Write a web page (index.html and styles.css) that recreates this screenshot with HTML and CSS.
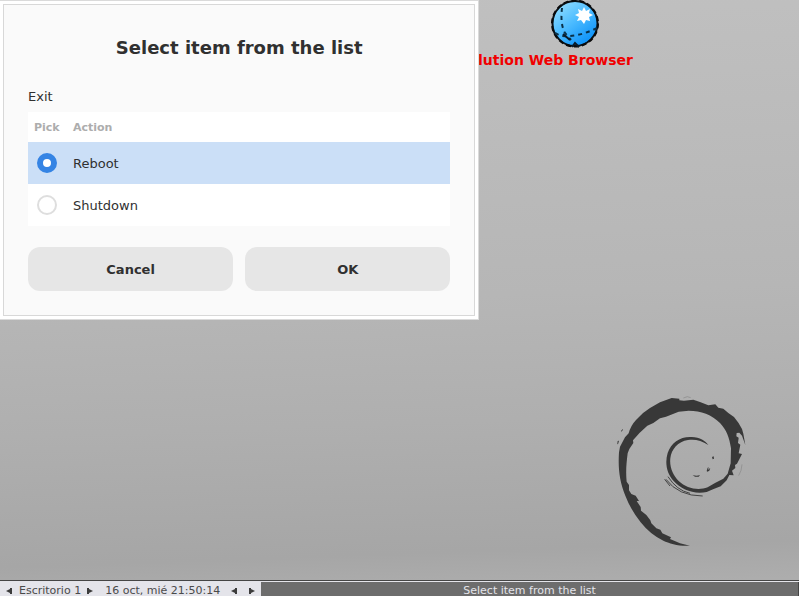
FILE: index.html
```html
<!DOCTYPE html>
<html lang="es">
<head>
<meta charset="utf-8">
<title>Select item from the list</title>
<link rel="stylesheet" href="styles.css">
</head>
<body>
<main class="desktop">
  <a class="launcher" href="#">
    <svg class="globe" viewBox="0 0 48 48" aria-hidden="true">
      <defs>
        <linearGradient id="sea" x1="0.1" y1="0.1" x2="0.7" y2="0.9">
          <stop offset="0" stop-color="#8fdcff"/>
          <stop offset="0.5" stop-color="#4dbcff"/>
          <stop offset="1" stop-color="#1497fa"/>
        </linearGradient>
      </defs>
      <circle cx="24" cy="23.500" r="22.500" fill="url(#sea)" stroke="#0a1218" stroke-width="2"/>
      <circle cx="24" cy="23.500" r="23" fill="none" stroke="#0a0a0a" stroke-width="2" stroke-dasharray="5 3"/>
      <path d="M11 8C10 16 10 26 14 33L20 40" fill="none" stroke="#0a3048" stroke-width="2" stroke-dasharray="4 4"/>
      <path d="M4 33L10 36C22 37 34 34 46 28" fill="none" stroke="#0a3048" stroke-width="2" stroke-dasharray="4 4"/>
      <path d="M12 34L19 40M21 47L24 43L28 47" fill="none" stroke="#0a1a28" stroke-width="2"/>
      <path d="M33 7L35 11L39 9L38 13L42 15L38 17L39 21L35 20L33 24L30 20L26 21L28 17L24 15L28 13L27 9L31 11Z" fill="#fff"/>
    </svg>
    <span class="launcher-name">lution Web Browser</span>
  </a>

  <svg class="swirl" viewBox="0 0 480 525" aria-hidden="true">
    <path d="M270 482C240 485 208 475 190 467Q152 450 122 412Q92 374 76 332C58 288 54 250 57 202L60 185L75 157L86 145Q92 122 108 105Q128 82 150 69L180 52L215 39L238 41L238 46L252 47L280 44L300 51L325 61L346 58L355 68L370 71L385 84L402 96Q418 115 426 132L430 146L436 180L426 152L418 143L410 144L409 154L416 158L414 174L421 179L416 205L426 207L418 223L411 236L405 240L406 249L396 257L401 271L388 270L380 286L362 304L341 312L320 321C280 329 244 313 221 288C200 266 194 234 203 204C214 172 241 154 275 156C300 157 316 168 325 180C304 166 285 162 264 165C234 169 214 193 211 220C208 246 219 270 236 288C260 311 295 317 323 307L345 294L370 281L383 266L392 235L393 190C388 158 380 135 360 114C336 89 303 77 266 77L236 80L198 95L180 100L160 114L142 122Q118 142 99 166L100 174L88 192L83 205C79 235 77 261 80 290L87 300L87 316L94 327L107 332L117 348L110 348L122 366L123 377L139 390L151 406L154 415L169 430L181 434L187 445L213 457L210 462L240 475Z"/>
    <path d="M63 138L69 131L68 136L64 140ZM52 177L53 168L57 167L54 178ZM336 216L341 214L342 221L338 223ZM320 258L323 248L326 247L324 255L331 248L328 257L322 260ZM278 270Q290 274 300 270L296 275L285 275Z"/>
    <path class="hair" d="M194 283L210 303M198 283Q235 333 308 333M204 275Q230 316 270 325"/>
    <path class="wisp" d="M250 39L262 35L272 38M426 238Q425 258 416 272"/>
  </svg>

  <form class="dialog" onsubmit="return false">
    <div class="sheet">
      <h1 class="title">Select item from the list</h1>
      <p class="prompt" id="prompt">Exit</p>
      <table class="choices" aria-labelledby="prompt">
        <thead>
          <tr><th class="pick">Pick</th><th>Action</th></tr>
        </thead>
        <tbody>
          <tr><td class="pick"><input type="radio" name="action" id="reboot" checked></td><td><label for="reboot">Reboot</label></td></tr>
          <tr><td class="pick"><input type="radio" name="action" id="shutdown"></td><td><label for="shutdown">Shutdown</label></td></tr>
        </tbody>
      </table>
      <div class="buttons">
        <button type="button">Cancel</button>
        <button type="submit">OK</button>
      </div>
    </div>
  </form>
</main>

<footer class="toolbar">
  <button class="arrow" aria-label="Previous workspace"><svg viewBox="0 0 6 6"><path d="M0 3L4 1V0H6V6H4V5Z"/></svg></button>
  <span class="workspace">Escritorio 1</span>
  <button class="arrow" aria-label="Next workspace"><svg viewBox="0 0 6 6"><path d="M6 3L2 1V0H0V6H2V5Z"/></svg></button>
  <time class="clock">16 oct, mié 21:50:14</time>
  <button class="arrow" aria-label="Previous window"><svg viewBox="0 0 6 6"><path d="M0 3L4 1V0H6V6H4V5Z"/></svg></button>
  <button class="arrow" aria-label="Next window"><svg viewBox="0 0 6 6"><path d="M6 3L2 1V0H0V6H2V5Z"/></svg></button>
  <button class="task">Select item from the list</button>
</footer>
</body>
</html>
```
FILE: styles.css
```css
* { box-sizing: border-box; }

body {
  margin: 0;
  height: 100vh;
  display: flex;
  flex-direction: column;
  overflow: hidden;
  font-family: "DejaVu Sans", sans-serif;
  font-size: 13px;
  color: #303030;
  background: linear-gradient(178deg, #c0c0c0 0%, #bdbdbd 15%, #b6b6b6 50%, #afafaf 70%, #a6a6a6 91%, #adadad 97%);
}

button { font: inherit; color: inherit; border: 0; padding: 0; }

.desktop {
  position: relative;
  flex: 1;
  min-height: 0;
}

.launcher {
  position: absolute;
  left: 478px;
  top: 0;
  color: #f00000;
  font-weight: bold;
  font-size: 14px;
  line-height: 16px;
  text-decoration: none;
  white-space: nowrap;
}

.globe {
  display: block;
  width: 48px;
  height: 48px;
  margin: 0 0 4px 73px;
}

.launcher-name { display: block; }

.swirl {
  position: absolute;
  left: 600px;
  top: 385px;
  width: 160px;
  height: 175px;
  fill: #383838;
}

.hair { fill: none; stroke: #444; stroke-width: 3; }
.wisp { fill: none; stroke: #888; stroke-width: 2; }

.dialog {
  position: relative;
  width: 60%;
  min-width: 320px;
  padding: 3px;
  background: #fff;
  border: solid #dadada;
  border-width: 1px 1px 1px 0;
}

.sheet {
  padding: 32px 24px 24px;
  background: #fafafa;
  border: 1px solid #d8d8d8;
}

.title {
  margin: 0 0 29px;
  font-size: 18px;
  line-height: 22px;
  text-align: center;
}

.prompt { margin: 0 0 6px; line-height: 18px; }

.choices {
  width: 100%;
  border-collapse: collapse;
  background: #fff;
}

.choices th {
  height: 30px;
  padding: 0;
  font-size: 11px;
  text-align: left;
  color: #adadad;
}

.choices td { height: 42px; padding: 0; }
.choices .pick { width: 45px; padding-left: 6px; }
.choices td.pick { padding-left: 9px; }
.choices tr:has(:checked) { background: #cbdff7; }

.choices input {
  appearance: none;
  display: block;
  width: 20px;
  height: 20px;
  margin: 0;
  border: 2px solid #dedede;
  border-radius: 50%;
  background: #fff;
}

.choices input:checked { border: 6px solid #3584e4; }

.buttons {
  display: grid;
  grid-template-columns: 1fr 1fr;
  gap: 12px;
  margin-top: 21px;
}

.buttons button {
  height: 44px;
  border-radius: 12px;
  background: #e6e6e6;
  font-weight: bold;
}

.toolbar {
  display: flex;
  align-items: stretch;
  height: 16px;
  border-top: 1px solid #454545;
  background: #e4e4ea;
  color: #4a4a4a;
  font-size: 11px;
  line-height: 19px;
  white-space: nowrap;
}

.arrow {
  width: 18px;
  padding-top: 4px;
  background: none;
  display: grid;
  place-items: center;
}

.arrow svg { width: 6px; height: 6px; fill: #3c3c3c; }

.workspace { padding-left: 1px; }
.clock { margin: 0 5px 0 6px; }

.task {
  flex: 1;
  margin-top: 1px;
  padding-top: 1px;
  border-right: 1px solid #454545;
  background: #6d6d6d;
  color: #e4e4ea;
  line-height: 16px;
}
```
